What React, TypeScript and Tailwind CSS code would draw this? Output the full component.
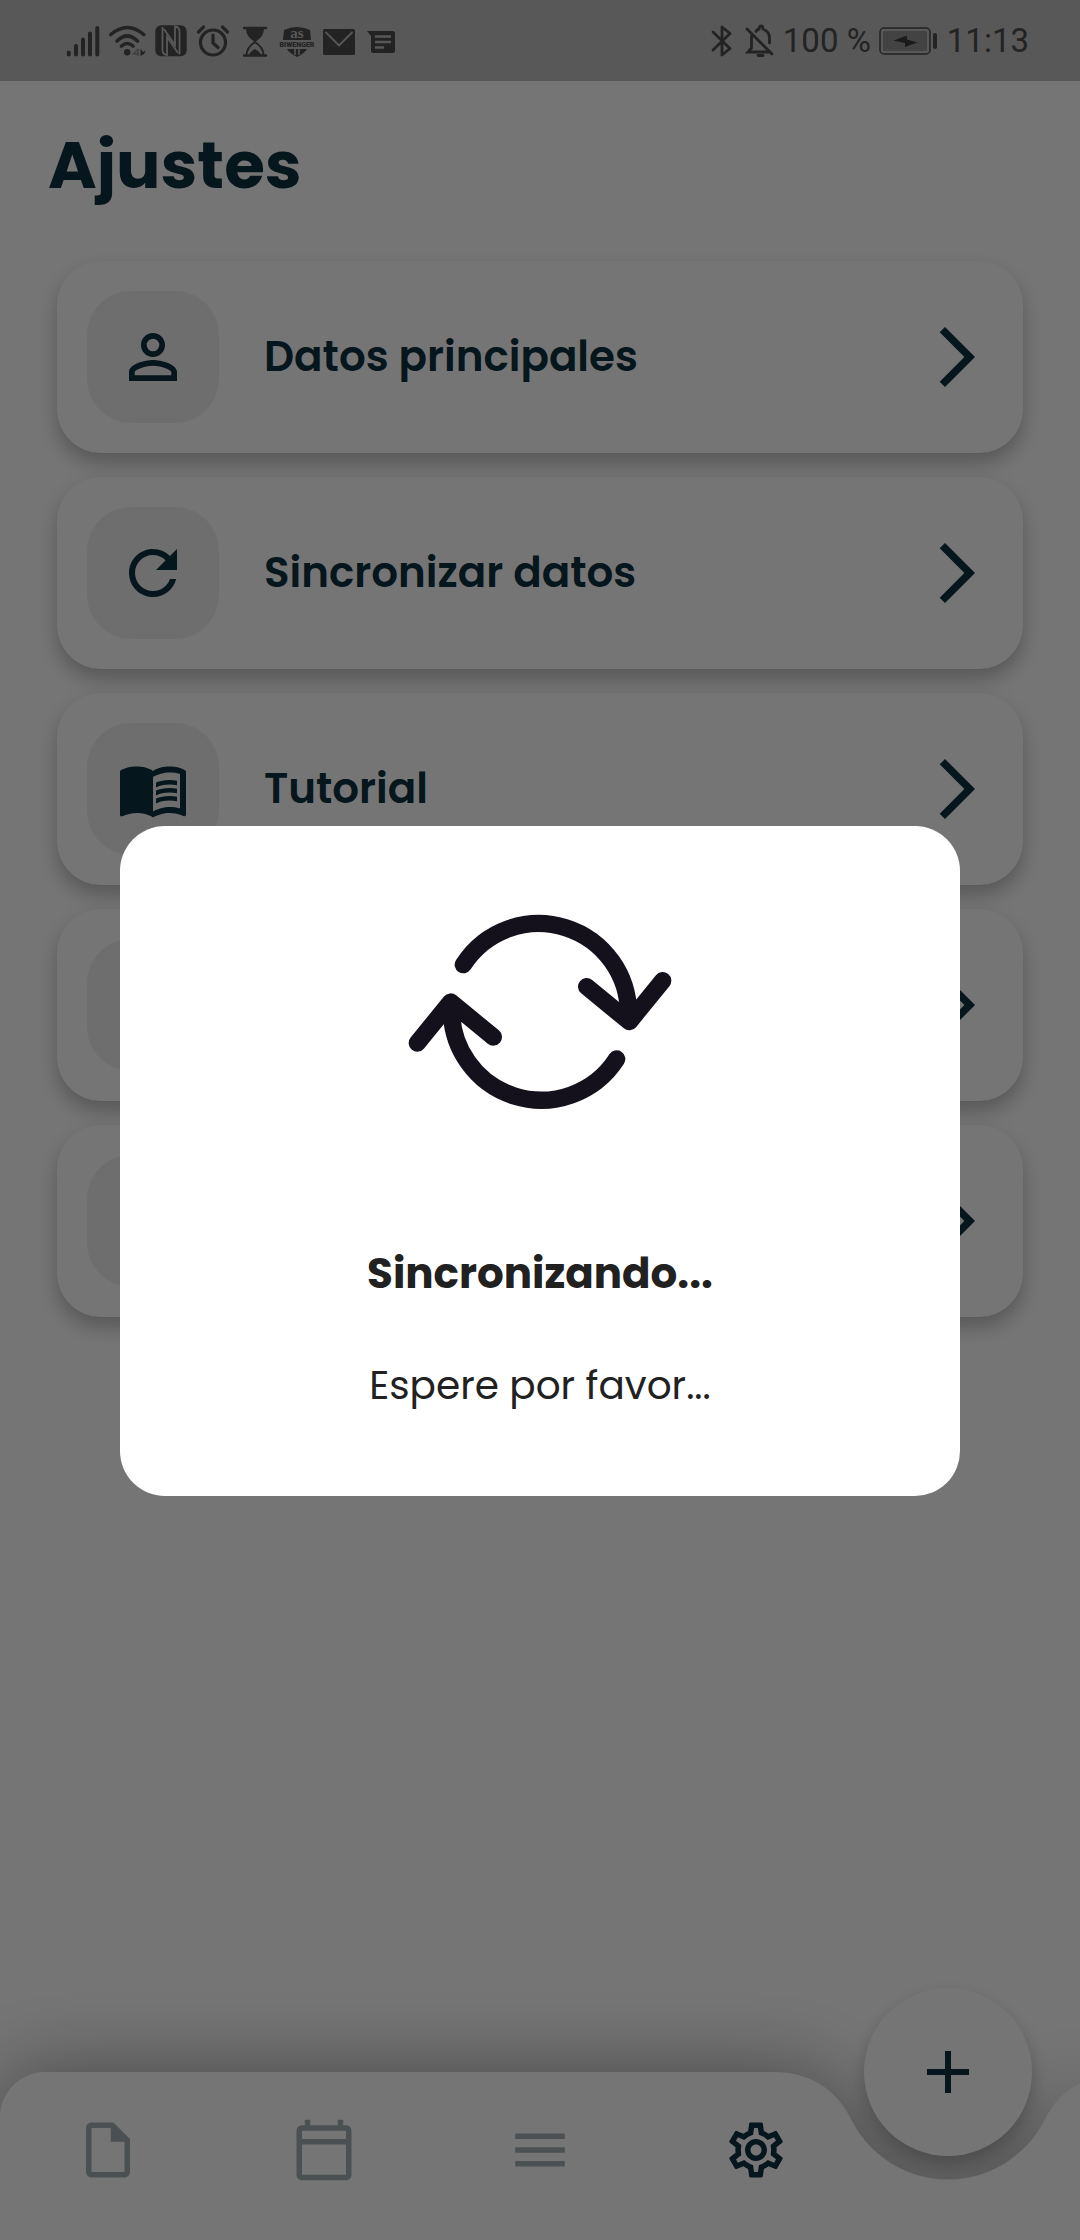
import { MdPersonOutline, MdRefresh, MdMenuBook, MdArrowForwardIos, MdAdd, MdOutlineSettings, MdMenu, MdOutlineCalendarToday, MdOutlineInsertDriveFile } from "react-icons/md";
import type { ReactNode } from "react";

function StatusIcon({ children }: { children: ReactNode }) {
  return (
    <svg viewBox="0 0 38 36" className="h-9 w-[38px] shrink-0" fill="none" stroke="none" aria-hidden="true">
      {children}
    </svg>
  );
}

function StatusBar() {
  return (
    <header className="flex h-[81px] items-center justify-between bg-[#bfbfbf] pr-[51px] pl-16 text-[#4c4c4c]">
      <div className="flex items-center gap-1">
        <div className="flex items-center gap-1.5">
          <StatusIcon>
            <path d="M4.800 29.500v2M12 23v8.500M19 16.500v15M26 10.500v21M33.300 5v26.500" stroke="currentColor" strokeWidth="4" strokeLinecap="round" />
          </StatusIcon>
          <StatusIcon>
            <g stroke="currentColor" strokeWidth="3.600" strokeLinecap="round">
              <path d="M2.800 11.500Q19.200-2.500 35.700 11.500" />
              <path d="M9 18Q19.200 8 29.500 18" />
              <path d="M13.500 23Q19.200 18 25 23" />
            </g>
            <circle cx="19.200" cy="29.300" r="3.200" fill="currentColor" />
            <path d="M30 26v7M30 26l-4.500 5h5" stroke="#8d8d8d" strokeWidth="1.500" />
            <path d="M32.500 25.500l2.500 3.500 3-1.500-2 3.500-3.500 2z" fill="currentColor" />
          </StatusIcon>
          <StatusIcon>
            <rect x="3.300" y="2.300" width="31.400" height="31" rx="6" fill="currentColor" />
            <path d="M10.500 4V27Q10.500 31.500 15 32V14L26 30M27.500 31.500V9Q27.500 4 23 3.500V22L12 6" stroke="#bfbfbf" strokeWidth="1.800" />
          </StatusIcon>
        </div>
        <StatusIcon>
          <circle cx="19" cy="19.500" r="12.500" stroke="currentColor" strokeWidth="3.200" />
          <path d="M19 12v8l5 4.500M4.500 9l5-5M33.500 9l-5-5" stroke="currentColor" strokeWidth="3.200" strokeLinecap="round" />
        </StatusIcon>
        <StatusIcon>
          <path d="M8 5h22M8 32.500h22" stroke="currentColor" strokeWidth="2.400" strokeLinecap="round" />
          <path d="M10 5h18c0 7-4 11-9 14-5-3-9-7-9-14z" fill="currentColor" />
          <path d="M10.500 32c0-6 4-10 8.500-13 4.500 3 8.500 7 8.500 13" stroke="currentColor" strokeWidth="2" />
          <path d="M13 32c1-3 3-4 6-6 3 2 5 3 6 6z" fill="currentColor" />
        </StatusIcon>
        <StatusIcon>
          <path d="M6 7q13-6 26 0l1 10H5z" fill="currentColor" />
          <text x="19" y="15" textAnchor="middle" fontFamily="Liberation Serif, serif" fontSize="15" fontWeight="700" fill="#bfbfbf">as</text>
          <text x="19" y="24" textAnchor="middle" fontFamily="Roboto, sans-serif" fontSize="7" fontWeight="900" fill="currentColor">BIWENGER</text>
          <path d="M9 26h20q-2 4-10 8-8-4-10-8z" fill="currentColor" />
          <path d="M17 26v6M21 26v6" stroke="#bfbfbf" strokeWidth="1.500" />
        </StatusIcon>
        <StatusIcon>
          <rect x="3" y="6" width="32" height="26" rx="1.500" fill="currentColor" />
          <path d="M5.500 9L19 22.500 32.500 9" stroke="#bfbfbf" strokeWidth="1.800" />
        </StatusIcon>
        <StatusIcon>
          <path d="M5 8h25.500a2.500 2.500 0 0 1 2.500 2.500v17a2.500 2.500 0 0 1-2.500 2.500h-19a2.500 2.500 0 0 1-2.500-2.500V13z" fill="currentColor" />
          <path d="M13 13.500h16M13 19h16M13 24.500h9" stroke="#bfbfbf" strokeWidth="2.400" />
        </StatusIcon>
      </div>
      <div className="flex items-center font-[Roboto,sans-serif] text-[33px] leading-10">
        <svg viewBox="0 0 22 36" className="mr-3 h-9 w-[22px]" fill="none" stroke="currentColor" strokeWidth="2.800" strokeLinejoin="round" strokeLinecap="round" aria-hidden="true">
          <path d="M2 9l17 16.500L11 32V4l8 6.500L2 27" />
        </svg>
        <svg viewBox="0 0 30 36" className="mr-2 h-9 w-[30px]" fill="none" stroke="currentColor" strokeWidth="2.800" strokeLinecap="round" aria-hidden="true">
          <path d="M2 6l25 25M6.500 13v12L3 29h20M11 8.500a4 4 0 0 1 3-2.500c0-4 4-4 4 0 5 2 6.500 5 6.500 9v5M13 32.500h5" />
        </svg>
        <span>100 %</span>
        <svg viewBox="0 0 60 28" className="ml-2 h-7 w-[60px]" aria-hidden="true">
          <rect x="1" y="1" width="50" height="26" rx="4" fill="none" stroke="currentColor" strokeWidth="1.500" />
          <rect x="4" y="4" width="44" height="20" rx="1" fill="#939393" />
          <path d="M14.500 13.500L28 8.500v4l10.500 3L26 20v-4z" fill="#3c3c3c" />
          <rect x="54" y="6" width="4" height="16" rx="2" fill="currentColor" />
        </svg>
        <span className="ml-2">11:13</span>
      </div>
    </header>
  );
}

const options = [
  { label: "Datos principales", Icon: MdPersonOutline },
  { label: "Sincronizar datos", Icon: MdRefresh },
  { label: "Tutorial", Icon: MdMenuBook },
  { label: "", Icon: null },
  { label: "", Icon: null },
];

function OptionList() {
  return (
    <ul className="mx-[57px] flex flex-col gap-6">
      {options.map(({ label, Icon }, i) => (
        <li key={i}>
          <button
            type="button"
            aria-label={label || "Opción"}
            className="flex w-full items-center rounded-[44px] bg-white p-[30px] text-left shadow-[0_10px_20px_rgba(0,0,0,0.26)]"
          >
            <span className="flex size-[132px] items-center justify-center rounded-[44px] bg-[#efefef]">
              {Icon && <Icon className="size-[72px]" />}
            </span>
            <span className="ml-[45px] flex-1 text-[42px] leading-[60px] font-semibold">{label}</span>
            <MdArrowForwardIos className="size-[72px]" />
          </button>
        </li>
      ))}
    </ul>
  );
}

const tabs = [
  { label: "Documentos", Icon: MdOutlineInsertDriveFile, active: false },
  { label: "Calendario", Icon: MdOutlineCalendarToday, active: false },
  { label: "Lista", Icon: MdMenu, active: false },
  { label: "Ajustes", Icon: MdOutlineSettings, active: true },
];

function BottomBar() {
  return (
    <div className="relative">
      <div className="absolute inset-0 flex drop-shadow-[0_0_40px_rgba(0,0,0,0.38)]">
        <div className="flex-1 rounded-tl-[45px] bg-white" />
        <svg viewBox="0 0 320 168" className="-ml-px h-[168px] w-[320px] shrink-0" aria-hidden="true">
          <path d="M0 0H13Q68 0 92 49A108 108 0 0 0 284 49Q298 21 320 12V168H0z" fill="#fff" />
        </svg>
      </div>
      <nav className="relative grid h-[168px] grid-cols-5">
        {tabs.map(({ label, Icon, active }) => (
          <a
            key={label}
            href="#"
            aria-label={label}
            aria-current={active ? "page" : undefined}
            className={active ? "flex items-center justify-center pb-3" : "flex items-center justify-center pb-3 text-[#a3b0b4]"}
          >
            <Icon className="size-[66px]" />
          </a>
        ))}
      </nav>
      <button
        type="button"
        aria-label="Añadir"
        className="absolute -top-[84px] right-12 flex size-[168px] items-center justify-center rounded-full bg-white shadow-[0_9px_18px_rgba(0,0,0,0.26)]"
      >
        <MdAdd className="size-[72px]" />
      </button>
    </div>
  );
}

function SyncDialog() {
  return (
    <div className="fixed inset-0 flex items-center justify-center bg-black/54 px-[120px] pt-[81px]">
      <div role="dialog" aria-modal="true" aria-labelledby="sync-title" className="flex w-full flex-col items-center rounded-[45px] bg-white pt-16 pb-20 text-[#212121]">
        <svg viewBox="0 0 900 720" className="h-60 w-[300px]" fill="none" stroke="#14111d" strokeWidth="52" strokeLinecap="round" strokeLinejoin="round" aria-hidden="true">
          <path d="M220 224A269 269 0 0 1 715 380M590 290L718 395 818 272" />
          <path d="M680 507A269 269 0 0 1 185 351M310 441L182 336 82 459" />
        </svg>
        <h2 id="sync-title" className="mt-[114px] text-[42px] leading-[60px] font-bold">Sincronizando...</h2>
        <p className="mt-[52px] text-[39px] leading-[60px]">Espere por favor...</p>
      </div>
    </div>
  );
}

export default function App() {
  return (
    <div className="flex min-h-screen flex-col bg-white font-[Poppins,Inter,sans-serif] text-[#0d303d]">
      <StatusBar />
      <main className="flex-1">
        <h1 className="mt-[36px] mb-[48px] ml-12 text-[66px] leading-[96px] font-bold">Ajustes</h1>
        <OptionList />
      </main>
      <BottomBar />
      <SyncDialog />
    </div>
  );
}
